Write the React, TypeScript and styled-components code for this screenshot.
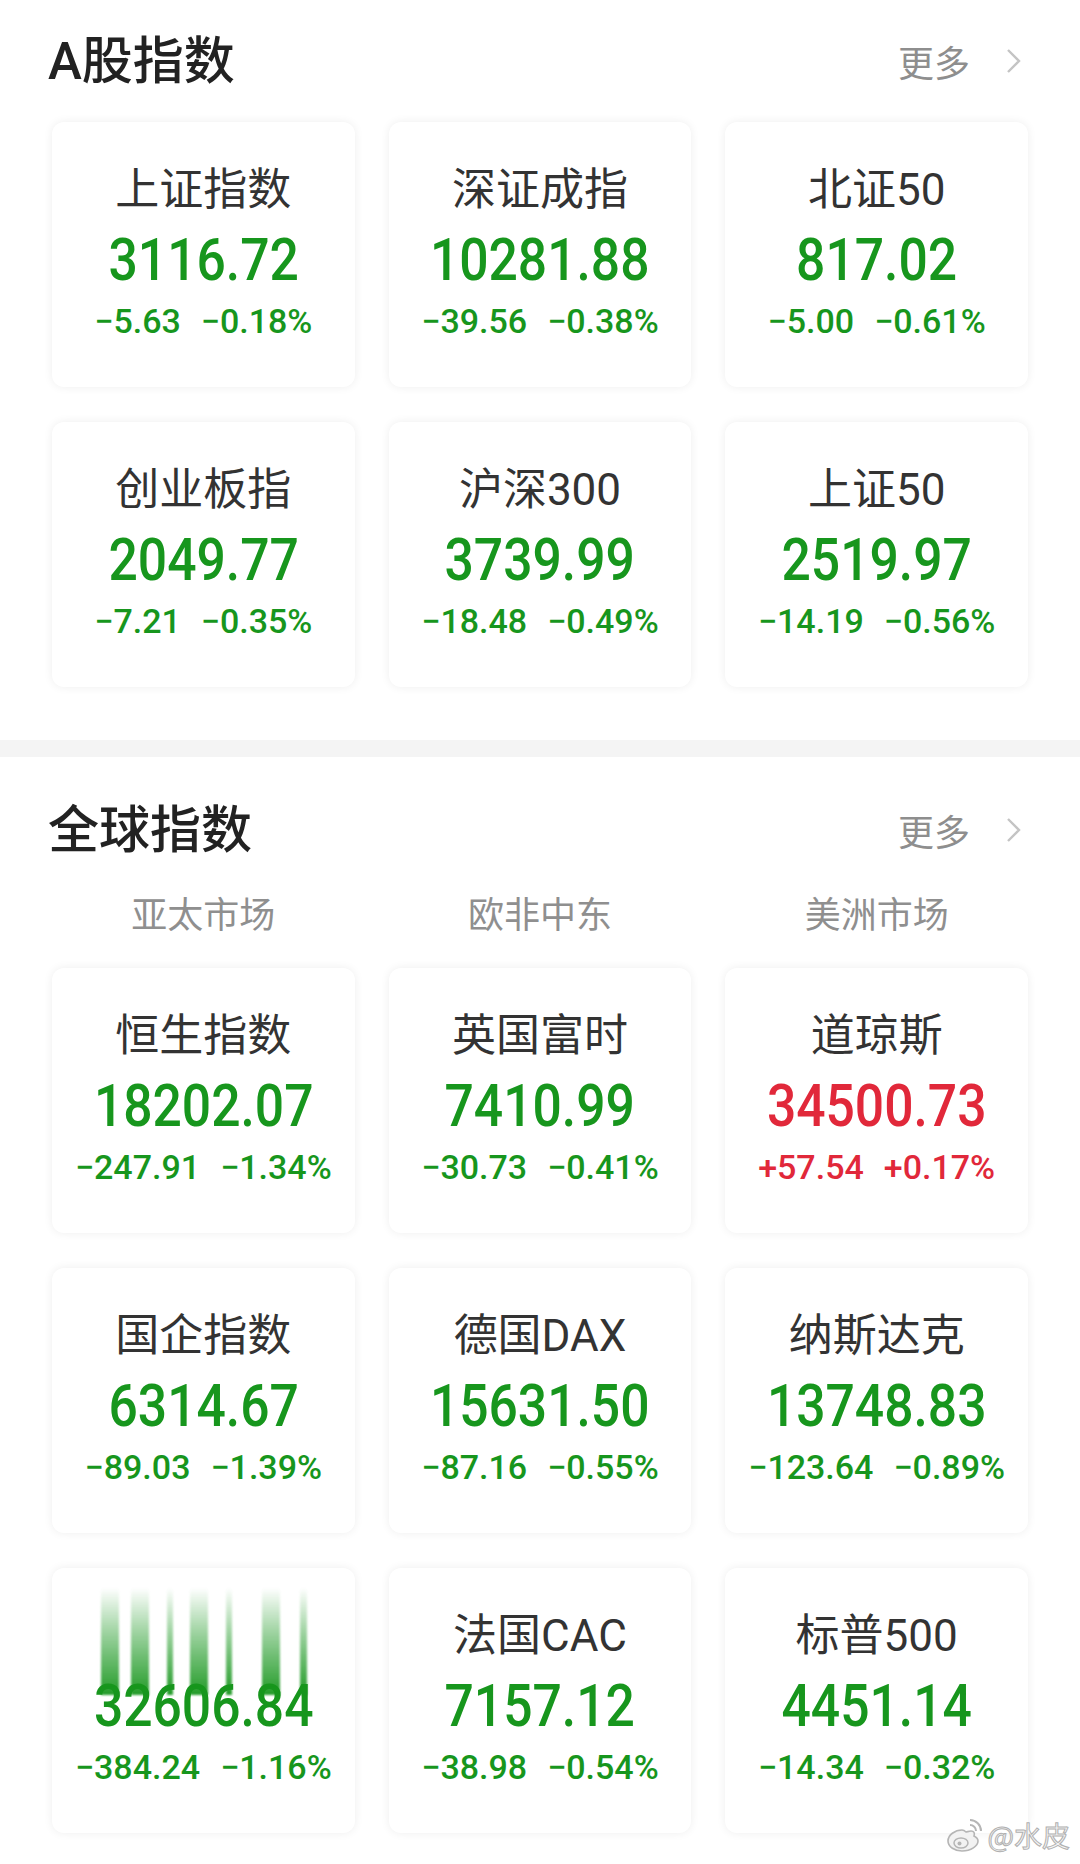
import React from "react";
import styled, { createGlobalStyle } from "styled-components";

const GREEN = "#17961d";
const RED = "#e1283a";

type Quote = {
	name: string;
	value: string;
	change: string;
	percent: string;
	glitch?: boolean;
};

const aShares: Quote[] = [
	{ name: "上证指数", value: "3116.72", change: "−5.63", percent: "−0.18%" },
	{ name: "深证成指", value: "10281.88", change: "−39.56", percent: "−0.38%" },
	{ name: "北证50", value: "817.02", change: "−5.00", percent: "−0.61%" },
	{ name: "创业板指", value: "2049.77", change: "−7.21", percent: "−0.35%" },
	{ name: "沪深300", value: "3739.99", change: "−18.48", percent: "−0.49%" },
	{ name: "上证50", value: "2519.97", change: "−14.19", percent: "−0.56%" },
];

const globalIndices: Quote[] = [
	{ name: "恒生指数", value: "18202.07", change: "−247.91", percent: "−1.34%" },
	{ name: "英国富时", value: "7410.99", change: "−30.73", percent: "−0.41%" },
	{ name: "道琼斯", value: "34500.73", change: "+57.54", percent: "+0.17%" },
	{ name: "国企指数", value: "6314.67", change: "−89.03", percent: "−1.39%" },
	{ name: "德国DAX", value: "15631.50", change: "−87.16", percent: "−0.55%" },
	{ name: "纳斯达克", value: "13748.83", change: "−123.64", percent: "−0.89%" },
	{ name: "", value: "32606.84", change: "−384.24", percent: "−1.16%", glitch: true },
	{ name: "法国CAC", value: "7157.12", change: "−38.98", percent: "−0.54%" },
	{ name: "标普500", value: "4451.14", change: "−14.34", percent: "−0.32%" },
];

const markets = ["亚太市场", "欧非中东", "美洲市场"];

// smeared strokes above the value in the glitched card: [left, width]
const glitchBars: [number, number][] = [
	[49, 18],
	[79, 18],
	[115, 6],
	[138, 18],
	[174, 6],
	[210, 18],
	[248, 7],
];

function IndexCard({ quote }: { quote: Quote }) {
	const up = quote.change.startsWith("+");
	return (
		<Card>
			<Name>{quote.name}</Name>
			<Value $up={up}>{quote.value}</Value>
			<Change $up={up}>
				<span>{quote.change}</span>
				<span>{quote.percent}</span>
			</Change>
			{quote.glitch && (
				<Glitch>
					{glitchBars.map(([left, width]) => (
						<GlitchBar key={left} style={{ left, width }} />
					))}
				</Glitch>
			)}
		</Card>
	);
}

function SectionHeader({ title }: { title: string }) {
	return (
		<Header>
			<Title>{title}</Title>
			<More>
				更多
				<svg width="16" height="26" viewBox="0 0 16 26">
					<polyline points="2,2 13,13 2,24" fill="none" stroke="#c4c4c4" strokeWidth="2.4" />
				</svg>
			</More>
		</Header>
	);
}

export default function App() {
	return (
		<Page>
			<GlobalStyle />
			<Section>
				<SectionHeader title="A股指数" />
				<Grid>
					{aShares.map((q) => (
						<IndexCard key={q.name} quote={q} />
					))}
				</Grid>
			</Section>
			<Divider />
			<GlobalSection>
				<SectionHeader title="全球指数" />
				<Tabs>
					{markets.map((m) => (
						<Tab key={m}>{m}</Tab>
					))}
				</Tabs>
				<CardsGrid>
					{globalIndices.map((q) => (
						<IndexCard key={q.value} quote={q} />
					))}
				</CardsGrid>
			</GlobalSection>
			<Watermark>
				<svg width="38" height="36" viewBox="0 0 38 36">
					<path
						d="M16 13c-7 0-14 5-14 11 0 6 7 10 14 10 9 0 16-5 16-10 0-3-2-4-4-5 1-3 0-5-3-5-2 0-4 1-5 1-1-1-2-2-4-2z"
						fill="#f2f2f2"
						stroke="#b5b5b5"
						strokeWidth="1.6"
					/>
					<ellipse cx="15" cy="26" rx="7" ry="5" fill="none" stroke="#b5b5b5" strokeWidth="1.5" />
					<circle cx="13.5" cy="26.5" r="2" fill="#b5b5b5" />
					<path d="M24 3a11 11 0 0 1 11 11" fill="none" stroke="#b5b5b5" strokeWidth="2" />
					<path d="M24 8a6 6 0 0 1 6 6" fill="none" stroke="#b5b5b5" strokeWidth="2" />
				</svg>
				<span>@水皮</span>
			</Watermark>
		</Page>
	);
}

const GlobalStyle = createGlobalStyle`
	html, body {
		margin: 0;
		padding: 0;
		background: #ffffff;
	}
	body {
		font-family: Roboto, "Noto Sans CJK SC", "Noto Sans", sans-serif;
	}
`;

const Page = styled.div`
	position: relative;
	width: 1080px;
	height: 1864px;
	overflow: hidden;
	background: #ffffff;
`;

const Section = styled.section`
	padding-bottom: 53px;
`;

const GlobalSection = styled.section`
	padding-top: 18px;
`;

const Header = styled.div`
	height: 122px;
	display: flex;
	align-items: center;
	justify-content: space-between;
	padding: 0 58px 0 48px;
	box-sizing: border-box;

	${GlobalSection} & {
		height: 110px;
	}
`;

const Title = styled.h2`
	margin: 0;
	font-family: Roboto, "Noto Sans CJK SC", sans-serif;
	font-size: 51px;
	font-weight: 500;
	color: #222222;
	line-height: 1;
`;

const More = styled.div`
	display: flex;
	align-items: center;
	gap: 36px;
	font-family: "Noto Sans CJK SC", sans-serif;
	font-size: 36px;
	color: #8e8e8e;
	line-height: 1;
`;

const Grid = styled.div`
	display: grid;
	grid-template-columns: repeat(3, 1fr);
	column-gap: 34px;
	row-gap: 35px;
	padding: 0 52px;
`;

const CardsGrid = styled(Grid)`
	margin-top: 31px;
`;

const Divider = styled.div`
	height: 17px;
	background: #f4f4f4;
`;

const Tabs = styled.div`
	display: grid;
	grid-template-columns: repeat(3, 1fr);
	column-gap: 34px;
	padding: 0 52px;
	margin-top: 2px;
	height: 50px;
	align-items: center;
`;

const Tab = styled.div`
	text-align: center;
	font-family: "Noto Sans CJK SC", sans-serif;
	font-size: 36px;
	color: #8f8f8f;
	line-height: 50px;
`;

const Card = styled.div`
	position: relative;
	height: 265px;
	box-sizing: border-box;
	padding-top: 43px;
	display: flex;
	flex-direction: column;
	align-items: center;
	background: #ffffff;
	border-radius: 12px;
	box-shadow: 0 0 10px rgba(0, 0, 0, 0.07);
`;

const Name = styled.div`
	height: 50px;
	font-family: Roboto, "Noto Sans CJK SC", sans-serif;
	font-size: 44px;
	line-height: 50px;
	color: #333333;
	white-space: nowrap;
`;

const Value = styled.div<{ $up: boolean }>`
	margin-top: 13px;
	font-family: Roboto, sans-serif;
	font-size: 60px;
	font-weight: 500;
	line-height: 64px;
	color: ${(p) => (p.$up ? RED : GREEN)};
	transform: scaleX(0.86);
	white-space: nowrap;
`;

const Change = styled.div<{ $up: boolean }>`
	margin-top: 10px;
	display: flex;
	gap: 20px;
	font-family: Roboto, sans-serif;
	font-size: 34px;
	font-weight: 500;
	line-height: 38px;
	color: ${(p) => (p.$up ? RED : GREEN)};
	white-space: nowrap;
`;

const Glitch = styled.div`
	position: absolute;
	top: 20px;
	left: 0;
	right: 0;
	height: 107px;
	pointer-events: none;
`;

const GlitchBar = styled.div`
	position: absolute;
	top: 0;
	bottom: 0;
	background: linear-gradient(
		to bottom,
		rgba(23, 150, 29, 0) 0%,
		rgba(23, 150, 29, 0.45) 45%,
		rgba(23, 150, 29, 0.95) 100%
	);
	filter: blur(0.8px);
`;

const Watermark = styled.div`
	position: absolute;
	right: 10px;
	bottom: 9px;
	display: flex;
	align-items: center;
	gap: 4px;
	font-family: "Noto Sans CJK SC", sans-serif;
	font-size: 28px;
	color: rgba(245, 245, 245, 0.95);
	-webkit-text-stroke: 1px #b0b0b0;
`;
